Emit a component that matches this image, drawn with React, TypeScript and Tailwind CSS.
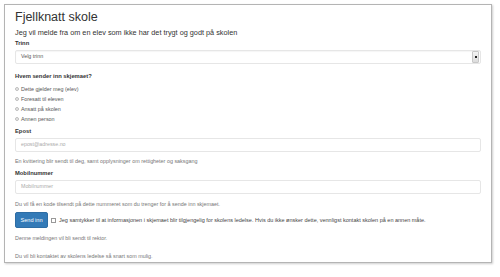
export default function App() {
  const radios = ['Dette gjelder meg (elev)', 'Foresatt til eleven', 'Ansatt på skolen', 'Annen person']

  return (
    <div className="h-[277px] w-[500px] bg-white pl-[4px] pt-[4px] font-['Liberation_Sans',Arial,sans-serif] text-[#333]">
      <div className="flex h-[259px] w-[488px] flex-col border border-[#b4b4b4] pl-[10px] pr-[10px] shadow-[1px_1px_2px_rgba(0,0,0,0.2)]">
        <h1 className="mt-[3px] h-[18px] text-[12.5px] leading-[18px]">Fjellknatt skole</h1>
        <p className="mt-[2px] h-[10px] text-[7.3px] leading-[10px]">
          Jeg vil melde fra om en elev som ikke har det trygt og godt på skolen
        </p>
        <label className="mt-[1px] h-[8px] text-[5.8px] font-bold leading-[8px]">Trinn</label>
        <div className="mt-[3px] flex h-[14px] w-[466px] items-center justify-between rounded-[2px] border border-[#e6e6e6] pl-[5px] pr-[1px] shadow-[inset_0_1px_1px_rgba(0,0,0,0.04)]">
          <span className="text-[5.3px] text-[#555]">Velg trinn</span>
          <span className="flex h-[12px] w-[7px] items-center justify-center rounded-[1px] border border-[#c8c8c8] bg-gradient-to-b from-[#f4f4f4] to-[#dcdcdc]">
            <span className="h-[2px] w-[2px] bg-[#222]" />
          </span>
        </div>

        <label className="mt-[8px] h-[8px] text-[5.8px] font-bold leading-[8px]">Hvem sender inn skjemaet?</label>
        <div className="mt-[4px] flex flex-col">
          {radios.map((r) => (
            <div key={r} className="flex h-[10px] items-center gap-[2px]">
              <span className="h-[4px] w-[4px] rounded-full border border-[#bdbdbd] bg-[#ececec]" />
              <span className="text-[5.4px] text-[#555]">{r}</span>
            </div>
          ))}
        </div>

        <label className="mt-[3px] h-[8px] text-[5.8px] font-bold leading-[8px]">Epost</label>
        <div className="mt-[3px] flex h-[14px] w-[466px] items-center rounded-[2px] border border-[#e6e6e6] pl-[5px]">
          <span className="text-[5.3px] text-[#aaa]">epost@adresse.no</span>
        </div>
        <p className="mt-[5px] h-[8px] text-[5.4px] leading-[8px] text-[#777]">
          En kvittering blir sendt til deg, samt opplysninger om rettigheter og saksgang
        </p>

        <label className="mt-[4px] h-[8px] text-[5.8px] font-bold leading-[8px]">Mobilnummer</label>
        <div className="mt-[3px] flex h-[14px] w-[466px] items-center rounded-[2px] border border-[#e6e6e6] pl-[5px]">
          <span className="text-[5.3px] text-[#aaa]">Mobilnummer</span>
        </div>
        <p className="mt-[6px] h-[8px] text-[5.4px] leading-[8px] text-[#777]">
          Du vil få en kode tilsendt på dette nummeret som du trenger for å sende inn skjemaet.
        </p>

        <div className="mt-[4px] flex h-[16px] items-center gap-[3px]">
          <button className="flex h-[16px] w-[33px] items-center justify-center rounded-[2px] border border-[#2e6da4] bg-[#337ab7] text-[5.6px] text-white">
            Send inn
          </button>
          <span className="h-[5px] w-[5px] border border-[#999] bg-white" />
          <span className="text-[5.5px] text-[#444]">
            Jeg samtykker til at informasjonen i skjemaet blir tilgjengelig for skolens ledelse. Hvis du ikke ønsker dette,
            vennligst kontakt skolen på en annen måte.
          </span>
        </div>

        <p className="mt-[6px] h-[8px] text-[5.4px] leading-[8px] text-[#777]">Denne meldingen vil bli sendt til rektor.</p>
        <p className="mt-[10px] h-[8px] text-[5.4px] leading-[8px] text-[#777]">
          Du vil bli kontaktet av skolens ledelse så snart som mulig.
        </p>
      </div>
    </div>
  )
}
